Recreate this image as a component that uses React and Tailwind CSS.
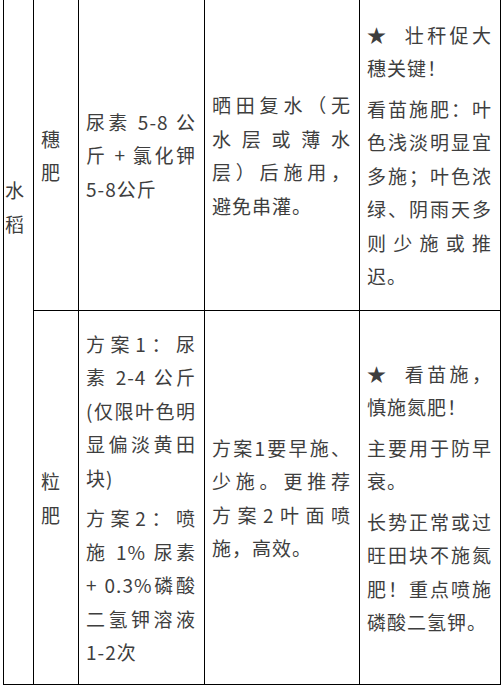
import React from "react";

const cell =
  "border border-black align-middle pl-[7px] pr-[8px] text-justify [text-spacing-trim:space-all]";

const Para = ({ children, first }) => (
  <p className={first ? "" : "mt-[7px]"}>{children}</p>
);

export default function App() {
  return (
    <div
      className="w-[504px] h-[685px] overflow-hidden bg-white pl-[3px] text-[19px] leading-[33.5px] tracking-[1px] text-[#3e3e3e]"
      style={{ fontFamily: '"Noto Sans CJK SC", "Noto Sans", sans-serif' }}
    >
      <table className="table-fixed border-collapse w-[497px] -mt-[1px]">
        <colgroup>
          <col className="w-[30px]" />
          <col className="w-[45px]" />
          <col className="w-[126px]" />
          <col className="w-[155px]" />
          <col className="w-[141px]" />
        </colgroup>
        <tbody>
          <tr className="h-[311px]">
            <td
              rowSpan={2}
              className="border border-black align-top pl-[1px] pr-0 pt-[173px]"
            >
              水稻
            </td>
            <td className={cell}>穗肥</td>
            <td className={cell}>尿素 5-8 公斤 + 氯化钾 5-8公斤</td>
            <td className={cell}>晒田复水（无水层或薄水层）后施用，避免串灌。</td>
            <td className={cell}>
              <Para first>★&nbsp; 壮秆促大穗关键！</Para>
              <Para>看苗施肥：叶色浅淡明显宜多施；叶色浓绿、阴雨天多则少施或推迟。</Para>
            </td>
          </tr>
          <tr className="h-[374px]">
            <td className={cell}>粒肥</td>
            <td className={cell}>
              <Para first>方案1：尿素 2-4 公斤 (仅限叶色明显偏淡黄田块)</Para>
              <Para>方案2：喷施 1% 尿素 + 0.3%磷酸二氢钾溶液 1-2次</Para>
            </td>
            <td className={cell}>方案1要早施、少施。更推荐方案2叶面喷施，高效。</td>
            <td className={cell}>
              <Para first>★&nbsp; 看苗施，慎施氮肥！</Para>
              <Para>主要用于防早衰。</Para>
              <Para>长势正常或过旺田块不施氮肥！重点喷施磷酸二氢钾。</Para>
            </td>
          </tr>
        </tbody>
      </table>
    </div>
  );
}
